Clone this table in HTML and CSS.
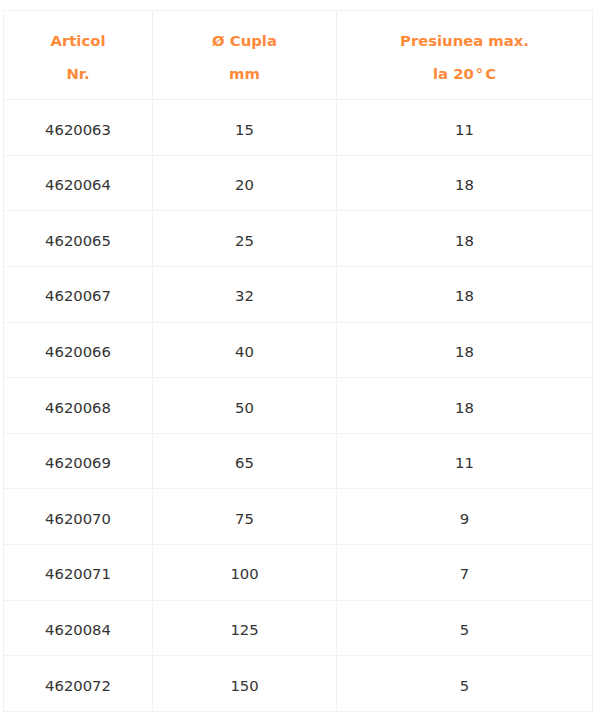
FILE: index.html
```html
<!DOCTYPE html>
<html>
<head>
<meta charset="utf-8">
<link rel="stylesheet" href="styles.css">
</head>
<body>
<table class="spec">
  <colgroup>
    <col class="c1">
    <col class="c2">
    <col class="c3">
  </colgroup>
  <thead>
    <tr>
      <th>Articol<br>Nr.</th>
      <th>Ø Cupla<br>mm</th>
      <th>Presiunea max.<br>la 20<span class="deg">°</span>C</th>
    </tr>
  </thead>
  <tbody>
    <tr><td>4620063</td><td>15</td><td>11</td></tr>
    <tr><td>4620064</td><td>20</td><td>18</td></tr>
    <tr><td>4620065</td><td>25</td><td>18</td></tr>
    <tr><td>4620067</td><td>32</td><td>18</td></tr>
    <tr><td>4620066</td><td>40</td><td>18</td></tr>
    <tr><td>4620068</td><td>50</td><td>18</td></tr>
    <tr><td>4620069</td><td>65</td><td>11</td></tr>
    <tr><td>4620070</td><td>75</td><td>9</td></tr>
    <tr><td>4620071</td><td>100</td><td>7</td></tr>
    <tr><td>4620084</td><td>125</td><td>5</td></tr>
    <tr><td>4620072</td><td>150</td><td>5</td></tr>
  </tbody>
</table>
</body>
</html>
```

FILE: styles.css
```css
html, body {
  margin: 0;
  background: #ffffff;
}
body {
  padding: 10px 0 0 3px;
  font-family: "DejaVu Sans", Verdana, sans-serif;
  font-size: 14.8px;
  color: #333333;
}
.spec {
  border-collapse: collapse;
  width: 589px;
  table-layout: fixed;
}
.spec .c1 { width: 149px; }
.spec .c2 { width: 184px; }
.spec .c3 { width: 256px; }
.spec th,
.spec td {
  border: 1px solid #f1f1f1;
  text-align: center;
  vertical-align: middle;
  line-height: 33.6px;
  padding: 12.5px 8px 8.5px;
}
.spec th {
  color: #ff8a3a;
  font-weight: bold;
}
.spec td {
  font-weight: normal;
}
.deg {
  margin: 0 2px;
}
```
